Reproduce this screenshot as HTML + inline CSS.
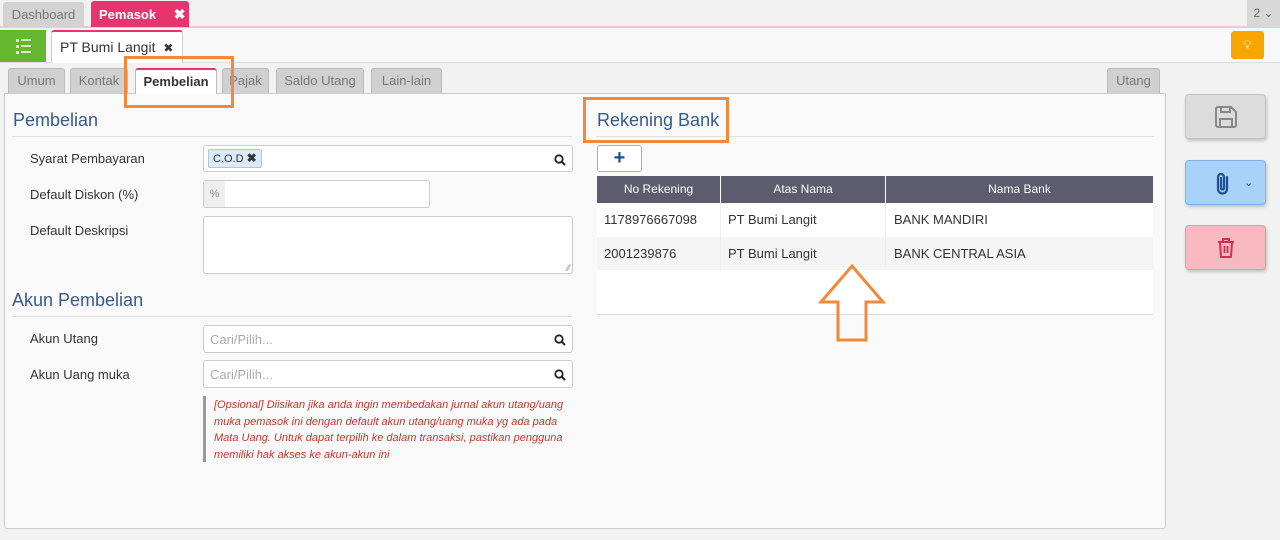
<!DOCTYPE html>
<html><head><meta charset="utf-8"><style>
*{box-sizing:border-box;margin:0;padding:0}
body{width:1280px;height:540px;overflow:hidden;background:#f2f2f2;font-family:"Liberation Sans",sans-serif;font-size:13px;color:#333;position:relative}
.a{position:absolute}
.tab{position:absolute;border-radius:3px 3px 0 0;text-align:center}
.st{position:absolute;top:68px;height:25px;background:#d0d0d0;border:1px solid #bbb;border-bottom:none;border-radius:3px 3px 0 0;color:#777;font-size:13px;line-height:24px;text-align:center}
.lbl{position:absolute;left:30px;font-size:13px;color:#333}
.inp{position:absolute;background:#fff;border:1px solid #ccc;border-radius:3px}
.ph{position:absolute;left:6px;top:6px;color:#aaa;font-size:13px}
.mag{position:absolute;right:6px;top:8px}
.h{position:absolute;font-size:18px;color:#3a5a8c}
.hr{position:absolute;height:1px;background:#e2e2e2}
.th{position:absolute;top:176px;height:27px;background:#5c5c6e;color:#fff;font-size:12px;line-height:27px;text-align:center}
.td{position:absolute;font-size:13px;color:#333}
.ob{position:absolute;border:3px solid #f0893a}
.btn{position:absolute;left:1185px;width:81px;height:45px;border-radius:4px;box-shadow:1px 2px 3px rgba(0,0,0,.2)}
</style></head><body>
<div class="a" style="left:0;top:0;width:1280px;height:27px;background:#f1f1f1"></div>
<div class="a" style="left:0;top:26px;width:1280px;height:2px;background:#f0c6d2"></div>
<div class="tab" style="left:3px;top:2px;width:81px;height:25px;background:#d3d3d3;color:#777;line-height:25px;font-size:13px">Dashboard</div>
<div class="tab" style="left:91px;top:1px;width:98px;height:26px;background:#e8336e;color:#fff;font-weight:bold;line-height:26px;font-size:13px;text-align:left;padding-left:8px">Pemasok <span style="margin-left:14px;font-size:14px">✖</span></div>
<div class="a" style="left:1247px;top:0;width:33px;height:27px;background:#d8d8d8;color:#666;font-size:12px;line-height:27px;text-align:center">2 ⌄</div>
<div class="a" style="left:0;top:28px;width:1280px;height:35px;background:#f8f8f8;border-bottom:1px solid #ddd"></div>
<div class="a" style="left:0;top:30px;width:46px;height:32px;background:#63b82d">
<svg width="46" height="32"><g fill="#d8f0c8"><rect x="16" y="9" width="3" height="3"/><rect x="21" y="9" width="10" height="2"/><rect x="16" y="15" width="3" height="3"/><rect x="21" y="15" width="10" height="2"/><rect x="16" y="21" width="3" height="3"/><rect x="21" y="21" width="10" height="2"/></g></svg></div>
<div class="a" style="left:51px;top:30px;width:132px;height:33px;background:#fff;border:1px solid #ccc;border-top:2px solid #e8336e;border-bottom:none;border-radius:3px 3px 0 0;font-size:14px;line-height:30px;padding-left:8px;color:#333">PT Bumi Langit <span style="margin-left:4px;font-size:12px">✖</span></div>
<div class="a" style="left:1231px;top:31px;width:33px;height:28px;background:#f7a600;border-radius:3px;color:#fff;text-align:center;line-height:28px;font-size:12px">💡︎</div>
<div class="st" style="left:8px;width:57px">Umum</div>
<div class="st" style="left:70px;width:58px">Kontak</div>
<div class="st" style="left:135px;width:82px;background:#fff;color:#333;font-weight:bold;border-top:2px solid #e8336e;height:26px;z-index:2">Pembelian</div>
<div class="st" style="left:222px;width:47px">Pajak</div>
<div class="st" style="left:276px;width:88px">Saldo Utang</div>
<div class="st" style="left:371px;width:71px">Lain-lain</div>
<div class="st" style="left:1107px;width:53px">Utang</div>
<div class="a" style="left:4px;top:93px;width:1162px;height:436px;background:#f9f9f9;border:1px solid #ccc;border-radius:0 0 3px 3px"></div>
<div class="h" style="left:13px;top:110px">Pembelian</div>
<div class="hr" style="left:12px;top:136px;width:560px"></div>
<div class="lbl" style="top:151px">Syarat Pembayaran</div>
<div class="inp" style="left:203px;top:145px;width:370px;height:27px"><div class="a" style="left:4px;top:3px;width:54px;height:19px;background:#dbeaf8;border:1px solid #a9c8e6;border-radius:2px;font-size:11px;line-height:17px;padding-left:4px;color:#333">C.O.D <b style="font-size:12px">✖</b></div>
<svg class="mag" width="12" height="12"><circle cx="5" cy="5" r="3.7" fill="none" stroke="#222" stroke-width="1.8"/><line x1="7.8" y1="7.8" x2="11" y2="11" stroke="#222" stroke-width="2"/></svg></div>
<div class="lbl" style="top:187px">Default Diskon (%)</div>
<div class="inp" style="left:203px;top:180px;width:227px;height:28px"><div class="a" style="left:0;top:0;width:21px;height:26px;background:#eee;color:#999;font-size:11px;line-height:26px;text-align:center">%</div></div>
<div class="lbl" style="top:223px">Default Deskripsi</div>
<div class="inp" style="left:203px;top:216px;width:370px;height:58px"><span class="a" style="right:2px;bottom:0;font-size:9px;color:#888">⁄⁄</span></div>
<div class="h" style="left:12px;top:290px">Akun Pembelian</div>
<div class="hr" style="left:12px;top:316px;width:560px"></div>
<div class="lbl" style="top:331px">Akun Utang</div>
<div class="inp" style="left:203px;top:325px;width:370px;height:28px"><span class="ph">Cari/Pilih...</span><svg class="mag" width="12" height="12"><circle cx="5" cy="5" r="3.7" fill="none" stroke="#222" stroke-width="1.8"/><line x1="7.8" y1="7.8" x2="11" y2="11" stroke="#222" stroke-width="2"/></svg></div>
<div class="lbl" style="top:367px">Akun Uang muka</div>
<div class="inp" style="left:203px;top:360px;width:370px;height:28px"><span class="ph">Cari/Pilih...</span><svg class="mag" width="12" height="12"><circle cx="5" cy="5" r="3.7" fill="none" stroke="#222" stroke-width="1.8"/><line x1="7.8" y1="7.8" x2="11" y2="11" stroke="#222" stroke-width="2"/></svg></div>
<div class="a" style="left:203px;top:396px;width:3px;height:66px;background:#999"></div>
<div class="a" style="left:214px;top:397px;width:360px;font-size:11px;font-style:italic;color:#c0392b;line-height:16.5px">[Opsional] Diisikan jika anda ingin membedakan jurnal akun utang/uang muka pemasok ini dengan default akun utang/uang muka yg ada pada Mata Uang. Untuk dapat terpilih ke dalam transaksi, pastikan pengguna memiliki hak akses ke akun-akun ini</div>
<div class="h" style="left:597px;top:110px">Rekening Bank</div>
<div class="hr" style="left:596px;top:136px;width:558px"></div>
<div class="a" style="left:597px;top:145px;width:45px;height:27px;background:#fff;border:1px solid #aac;border-radius:3px;color:#1f4e8c;font-weight:bold;font-size:20px;text-align:center;line-height:24px">+</div>
<div class="th" style="left:597px;width:123px">No Rekening</div>
<div class="th" style="left:721px;width:164px">Atas Nama</div>
<div class="th" style="left:886px;width:267px">Nama Bank</div>
<div class="a" style="left:597px;top:203px;width:556px;height:34px;background:#fff"></div>
<div class="a" style="left:597px;top:237px;width:556px;height:33px;background:#f5f5f5"></div>
<div class="a" style="left:597px;top:270px;width:556px;height:45px;background:#fff;border-bottom:1px solid #ddd"></div>
<div class="a" style="left:720px;top:203px;width:1px;height:67px;background:#eee"></div>
<div class="a" style="left:885px;top:203px;width:1px;height:67px;background:#eee"></div>
<div class="td" style="left:604px;top:212px">1178976667098</div>
<div class="td" style="left:728px;top:212px">PT Bumi Langit</div>
<div class="td" style="left:894px;top:212px">BANK MANDIRI</div>
<div class="td" style="left:604px;top:246px">2001239876</div>
<div class="td" style="left:728px;top:246px">PT Bumi Langit</div>
<div class="td" style="left:894px;top:246px">BANK CENTRAL ASIA</div>
<div class="ob" style="left:124px;top:56px;width:110px;height:52px;z-index:3"></div>
<div class="ob" style="left:583px;top:97px;width:146px;height:46px"></div>
<svg class="a" style="left:818px;top:263px" width="68" height="80"><path d="M34 3 L65 39 L48 39 L48 77 L20 77 L20 39 L3 39 Z" fill="none" stroke="#f0893a" stroke-width="3" stroke-linejoin="miter"/></svg>
<div class="btn" style="top:94px;background:#dcdcdc;border:1px solid #c4c4c4"><svg class="a" style="left:27px;top:9px" width="26" height="26"><path d="M3 5a2 2 0 0 1 2-2h13l5 5v13a2 2 0 0 1-2 2H5a2 2 0 0 1-2-2z" fill="none" stroke="#888" stroke-width="2" stroke-linejoin="round"/><path d="M8 3v5h9V3M7 23v-8h12v8" fill="none" stroke="#888" stroke-width="2"/></svg></div>
<div class="btn" style="top:160px;background:#a8d2fa;border:1px solid #7fb3e6"><svg class="a" style="left:28px;top:10px" width="18" height="26"><path d="M13 6v12a4.5 4.5 0 0 1-9 0V6a3 3 0 0 1 6 0v11a1.5 1.5 0 0 1-3 0V7" fill="none" stroke="#1f4e8c" stroke-width="2.2" stroke-linecap="round"/></svg><span class="a" style="left:58px;top:15px;color:#1f4e8c;font-size:11px">⌄</span></div>
<div class="btn" style="top:225px;background:#f8b8c0;border:1px solid #e59aa5"><svg class="a" style="left:30px;top:11px" width="20" height="22"><path d="M2 5h16M7 5V2h6v3M4 5l1 15h10l1-15" fill="none" stroke="#d0304e" stroke-width="2" stroke-linejoin="round"/><path d="M8.5 9v7M11.5 9v7" stroke="#d0304e" stroke-width="1.8"/></svg></div>
</body></html>
